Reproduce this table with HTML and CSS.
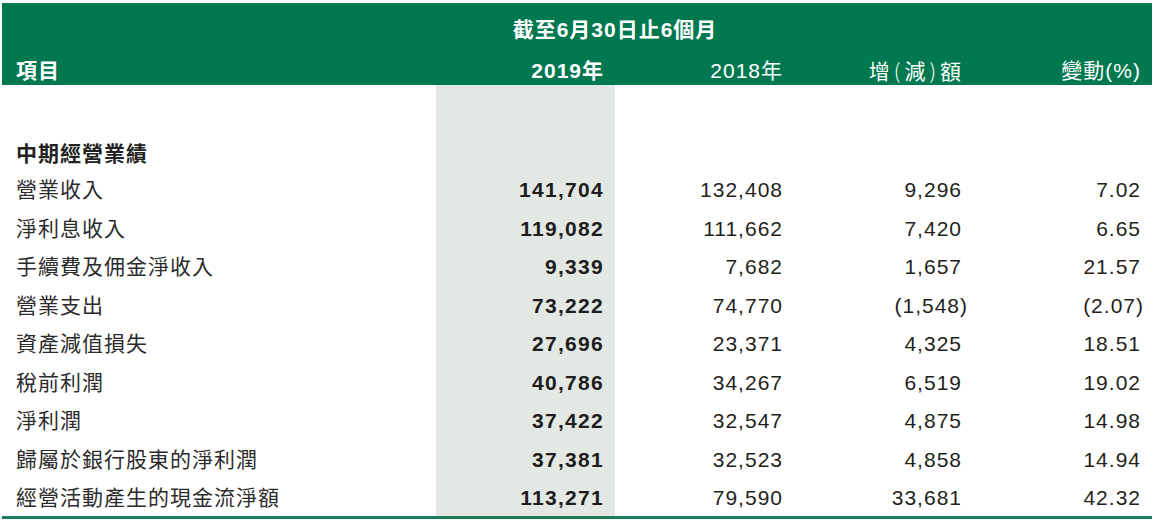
FILE: index.html
```html
<!DOCTYPE html>
<html lang="zh-Hant">
<head>
<meta charset="utf-8">
<title>中期經營業績</title>
<link rel="stylesheet" href="styles.css">
</head>
<body>
<table class="fin">
  <colgroup>
    <col class="c-label">
    <col class="c-cur">
    <col class="c-num">
    <col class="c-num">
    <col class="c-num">
  </colgroup>
  <thead>
    <tr class="h1">
      <th></th>
      <th colspan="2" class="span">截至6月30日止6個月</th>
      <th></th>
      <th></th>
    </tr>
    <tr class="h2">
      <th class="lbl b">項目</th>
      <th class="num b">2019年</th>
      <th class="num">2018年</th>
      <th class="num">增<span class="cjkp">(</span>減<span class="cjkp">)</span>額</th>
      <th class="num">變動(%)</th>
    </tr>
  </thead>
  <tbody>
    <tr class="spacer"><td></td><td></td><td></td><td></td><td></td></tr>
    <tr class="sec"><td class="lbl b">中期經營業績</td><td></td><td></td><td></td><td></td></tr>
    <tr class="row"><td class="lbl">營業收入</td><td class="num b">141,704</td><td class="num">132,408</td><td class="num">9,296</td><td class="num">7.02</td></tr>
    <tr class="row"><td class="lbl">淨利息收入</td><td class="num b">119,082</td><td class="num">111,662</td><td class="num">7,420</td><td class="num">6.65</td></tr>
    <tr class="row"><td class="lbl">手續費及佣金淨收入</td><td class="num b">9,339</td><td class="num">7,682</td><td class="num">1,657</td><td class="num">21.57</td></tr>
    <tr class="row"><td class="lbl">營業支出</td><td class="num b">73,222</td><td class="num">74,770</td><td class="num">(1,548<span class="hang">)</span></td><td class="num">(2.07<span class="hang2">)</span></td></tr>
    <tr class="row"><td class="lbl">資產減值損失</td><td class="num b">27,696</td><td class="num">23,371</td><td class="num">4,325</td><td class="num">18.51</td></tr>
    <tr class="row"><td class="lbl">稅前利潤</td><td class="num b">40,786</td><td class="num">34,267</td><td class="num">6,519</td><td class="num">19.02</td></tr>
    <tr class="row"><td class="lbl">淨利潤</td><td class="num b">37,422</td><td class="num">32,547</td><td class="num">4,875</td><td class="num">14.98</td></tr>
    <tr class="row"><td class="lbl">歸屬於銀行股東的淨利潤</td><td class="num b">37,381</td><td class="num">32,523</td><td class="num">4,858</td><td class="num">14.94</td></tr>
    <tr class="row last"><td class="lbl">經營活動產生的現金流淨額</td><td class="num b">113,271</td><td class="num">79,590</td><td class="num">33,681</td><td class="num">42.32</td></tr>
  </tbody>
</table>
</body>
</html>
```

FILE: styles.css
```css
html, body {
  margin: 0;
  padding: 0;
  background: #ffffff;
}

body {
  font-family: "Liberation Sans", "Noto Sans CJK TC", sans-serif;
  font-size: 21px;
  letter-spacing: 1px;
  color: #2b2b2b;
}

.fin {
  width: 1150px;
  margin: 3px 0 0 2px;
  border-collapse: collapse;
  table-layout: fixed;
}

.c-label { width: 434px; }
.c-cur { width: 179px; background: #e3e8e4; }
.c-num { width: 179px; }

.fin th,
.fin td {
  padding: 0;
  line-height: 24px;
  font-weight: normal;
  white-space: nowrap;
}

.fin thead tr {
  background: #00784f;
  color: #ffffff;
}

.h1 th {
  height: 54px;
  vertical-align: middle;
}

.h1 .span {
  text-align: center;
  font-weight: bold;
}

.h2 th {
  height: 28px;
  vertical-align: middle;
}

.lbl {
  text-align: left;
  padding-left: 14px !important;
}

.num {
  text-align: right;
  padding-right: 11px !important;
}

.b {
  font-weight: bold !important;
}

.cjkp {
  font-family: "Noto Sans CJK TC", sans-serif;
  font-weight: 300;
  padding: 0 3px;
}

.spacer td {
  height: 52px;
}

.sec td {
  height: 34px;
  vertical-align: middle;
  color: #222;
}

.row td {
  height: 38.5px;
  vertical-align: middle;
}

.row .num {
  color: #231f20;
}

.row .num.b {
  color: #1e1c1c;
  letter-spacing: 1.3px;
}

.last td {
  height: 37px;
  padding-bottom: 0;
  border-bottom: 3px solid #1a7d57;
}

.hang {
  margin-right: -6px;
}

.hang2 {
  margin-right: -3px;
}
```
